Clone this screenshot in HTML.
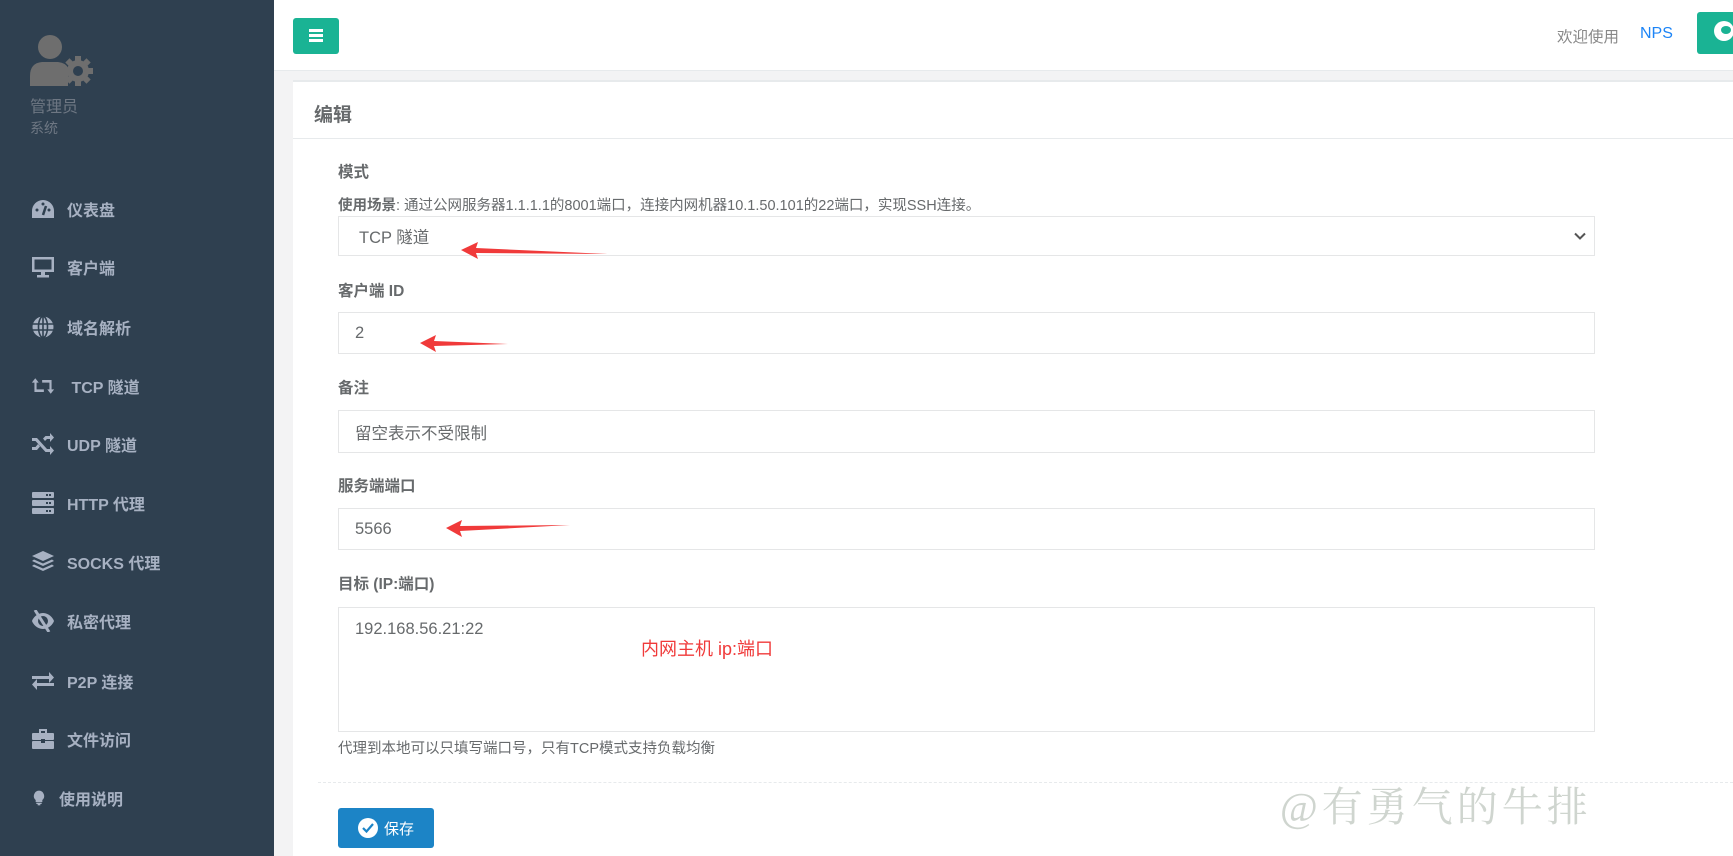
<!DOCTYPE html>
<html><head><meta charset="utf-8"><style>
*{box-sizing:border-box;margin:0;padding:0}
body{width:1733px;height:856px;overflow:hidden;background:#f3f3f4;font-family:"Liberation Sans","Noto Sans CJK SC",sans-serif;position:relative;color:#676a6c}
.side{position:absolute;left:0;top:0;width:274px;height:856px;background:#2f4050}
.abs{position:absolute}
.nav{position:absolute;left:31px;color:#a7b1c2;font-weight:bold;font-size:16px;display:flex;align-items:center;height:24px}
.nav svg{width:24px;height:22px;margin-right:12px;fill:#a7b1c2}
.hdr{position:absolute;left:274px;top:0;right:0;height:71px;background:#fff;border-bottom:1px solid #e7eaec}
.card{position:absolute;left:293px;top:80px;right:0;bottom:0;background:#fff;border-top:2px solid #e7eaec}
.lbl{position:absolute;left:338px;font-size:15.5px;color:#676a6c}
.box{position:absolute;left:338px;width:1257px;border:1px solid #e5e6e7;background:#fff;font-size:16.5px;color:#676a6c;padding-left:16px;display:flex;align-items:center}
</style></head><body>
<div class="side">
 <svg class="abs" style="left:30px;top:34px" width="64" height="52" viewBox="0 0 64 52"><circle cx="20" cy="13" r="12" fill="#6e6e6e"/><path d="M0 52 L0 42 Q0 29 12 28 L28 28 Q36 29 38 34 L38 52Z" fill="#6e6e6e"/><g transform="translate(48,37)"><circle r="11" fill="#6e6e6e"/><g fill="#6e6e6e"><rect x="-3" y="-15" width="6" height="30"/><rect x="-15" y="-3" width="30" height="6"/><rect x="-3" y="-15" width="6" height="30" transform="rotate(45)"/><rect x="-3" y="-15" width="6" height="30" transform="rotate(-45)"/></g><circle r="5" fill="#2f4050"/></g></svg>
 <div class="abs" style="left:30px;top:93px;font-size:16px;color:#6e7783">管理员</div>
 <div class="abs" style="left:30px;top:118px;font-size:14px;color:#6e7783">系统</div>
 <div class="nav" style="top:197px"><svg viewBox="0 0 24 22"><path d="M12 2A11 11 0 0 0 1 13v7h22v-7A11 11 0 0 0 12 2z"/><path d="M12 17l3-9" stroke="#2f4050" stroke-width="2.5"/><circle cx="6" cy="12" r="1.5" fill="#2f4050"/><circle cx="12" cy="6" r="1.5" fill="#2f4050"/><circle cx="18" cy="12" r="1.5" fill="#2f4050"/></svg>仪表盘</div>
 <div class="nav" style="top:255px"><svg viewBox="0 0 24 22"><path d="M1 1h22v15H1z M3.5 3.5v10h17v-10z" fill-rule="evenodd"/><rect x="10" y="16" width="4" height="3"/><rect x="6" y="19" width="12" height="2.5"/></svg>客户端</div>
 <div class="nav" style="top:315px"><svg viewBox="0 0 24 22"><circle cx="12" cy="11" r="10.5"/><g stroke="#2f4050" stroke-width="1.6" fill="none"><ellipse cx="12" cy="11" rx="4.5" ry="10.5"/><path d="M1.5 8h21M1.5 14h21M12 0.5v21"/></g></svg>域名解析</div>
 <div class="nav" style="top:374px"><svg viewBox="0 0 28 22"><path d="M1 7l4-5 4 5H6.5v8H15v3H4V7z M27 15l-4 5-4-5h2.5V7H13V4h11v11z"/></svg>&nbsp;TCP 隧道</div>
 <div class="nav" style="top:432px"><svg viewBox="0 0 24 22"><path d="M1 5h5l10 11h3v-3l4 4.5-4 4.5v-3h-4.5L4.5 8H1z M1 14h3.5l2.5-3 2 2.5L6 17H1z M14 8l-2-2.5 2.5-2.5H19V0l4 4.5-4 4.5V6h-3z"/></svg>UDP 隧道</div>
 <div class="nav" style="top:491px"><svg viewBox="0 0 24 22"><rect x="1" y="0" width="22" height="6" rx="1"/><rect x="1" y="8" width="22" height="6" rx="1"/><rect x="1" y="16" width="22" height="6" rx="1"/><g fill="#2f4050"><rect x="15" y="2" width="2" height="2"/><rect x="18" y="2" width="2" height="2"/><rect x="15" y="10" width="2" height="2"/><rect x="18" y="10" width="2" height="2"/><rect x="15" y="18" width="2" height="2"/><rect x="18" y="18" width="2" height="2"/></g></svg>HTTP 代理</div>
 <div class="nav" style="top:550px"><svg viewBox="0 0 24 22"><path d="M12 0l11 5-11 5L1 5z"/><path d="M3 8.5l9 4 9-4 2 1.5-11 5L1 10z"/><path d="M3 13.5l9 4 9-4 2 1.5-11 5L1 15z"/></svg>SOCKS 代理</div>
 <div class="nav" style="top:609px"><svg viewBox="0 0 24 22"><path d="M12 3C6 3 2 8 1 11c1 3 5 8 11 8s10-5 11-8c-1-3-5-8-11-8zm0 3a5 5 0 1 1 0 10a5 5 0 0 1 0-10z" fill-rule="evenodd"/><path d="M4 0l14 22" stroke="#a7b1c2" stroke-width="3"/></svg>私密代理</div>
 <div class="nav" style="top:669px"><svg viewBox="0 0 24 22"><path d="M1 6h17V2l5 5.5-5 5.5V9H1z M23 13H6V9l-5 5.5 5 5.5v-4h17z"/></svg>P2P 连接</div>
 <div class="nav" style="top:727px"><svg viewBox="0 0 24 22"><path d="M8 1h8v4h-2V3h-4v2H8z"/><rect x="1" y="5" width="22" height="7" rx="1"/><rect x="1" y="13" width="22" height="8" rx="1"/><rect x="10" y="11" width="4" height="4" fill="#2f4050"/></svg>文件访问</div>
 <div class="nav" style="top:786px"><svg viewBox="0 0 24 22" style="width:16px"><path d="M12 0a8 8 0 0 0-5 14v3h10v-3a8 8 0 0 0-5-14z"/><rect x="8" y="18" width="8" height="2"/><rect x="10" y="20" width="4" height="2"/></svg>使用说明</div>
</div>
<div class="hdr">
 <div class="abs" style="left:19px;top:18px;width:46px;height:36px;background:#1ab394;border-radius:3px"><div style="position:absolute;left:16px;top:11px;width:14px;height:3px;background:#fff;box-shadow:0 5px #fff,0 10px #fff"></div></div>
 <div class="abs" style="left:1283px;top:25px;font-size:15.5px;color:#888">欢迎使用</div>
 <div class="abs" style="left:1366px;top:25px;font-size:16px;color:#1c84f6">NPS</div>
 <div class="abs" style="left:1423px;top:12px;width:40px;height:42px;background:#1ab394;border-radius:3px 0 0 3px"><div style="position:absolute;left:17px;top:9px;width:20px;height:20px;border-radius:50%;background:#fff"></div><div style="position:absolute;left:24px;top:14px;width:10px;height:8px;border-radius:50%;background:#1ab394"></div></div>
</div>
<div class="card">
 <div class="abs" style="left:21px;top:18px;font-size:19px;font-weight:bold;color:#676a6c">编辑</div>
 <div class="abs" style="left:0;right:0;top:56px;border-top:1px solid #e7eaec"></div>
</div>
<div class="lbl" style="top:160px;font-weight:bold">模式</div>
<div class="lbl" style="top:194px;font-size:14.5px"><b>使用场景</b>: 通过公网服务器1.1.1.1的8001端口，连接内网机器10.1.50.101的22端口，实现SSH连接。</div>
<div class="box" style="top:216px;height:40px;padding-left:20px">TCP 隧道<svg style="position:absolute;right:8px;top:15px" width="12" height="9" viewBox="0 0 12 9"><path d="M1 1.5l5 5 5-5" stroke="#555" stroke-width="2" fill="none"/></svg></div>
<div class="lbl" style="top:279px;font-weight:bold">客户端 ID</div>
<div class="box" style="top:312px;height:42px">2</div>
<div class="lbl" style="top:376px;font-weight:bold">备注</div>
<div class="box" style="top:410px;height:43px">留空表示不受限制</div>
<div class="lbl" style="top:474px;font-weight:bold">服务端端口</div>
<div class="box" style="top:508px;height:42px">5566</div>
<div class="lbl" style="top:572px;font-weight:bold">目标 (IP:端口)</div>
<div class="box" style="top:607px;height:125px;align-items:flex-start;padding-top:12px">192.168.56.21:22</div>
<div class="lbl" style="top:737px;font-size:14.5px">代理到本地可以只填写端口号，只有TCP模式支持负载均衡</div>
<div class="abs" style="left:318px;right:0;top:782px;border-top:1px dashed #e7eaec"></div>
<div class="abs" style="left:338px;top:808px;width:96px;height:40px;background:#1c84c6;border-radius:3px;color:#fff;font-size:15px;display:flex;align-items:center;padding-left:20px"><span style="display:inline-block;width:20px;height:20px;border-radius:50%;background:#fff;margin-right:6px;position:relative"><svg style="position:absolute;left:4px;top:5px" width="12" height="10" viewBox="0 0 12 10"><path d="M1 5l3.5 3.5L11 1" stroke="#1c84c6" stroke-width="2.2" fill="none"/></svg></span>保存</div>
<svg class="abs" style="left:0;top:0" width="1733" height="856">
 <g fill="#f03a3a">
  <path d="M461 250 L478 242 L476 248 L608 254 L476 253 L478 259Z"/>
  <path d="M420 343 L436 335 L434 341 L508 344 L434 346 L436 352Z"/>
  <path d="M446 528 L462 520 L460 526 L570 525 L460 531 L462 537Z"/>
 </g>
</svg>
<div class="abs" style="left:641px;top:635px;font-size:18px;color:#f03a3a">内网主机 ip:端口</div>
<div class="abs" style="left:1280px;top:774px;font-size:41px;color:#cfd5cf;font-family:'Liberation Serif','Noto Serif CJK SC',serif;letter-spacing:4px">@有勇气的牛排</div>
</body></html>
